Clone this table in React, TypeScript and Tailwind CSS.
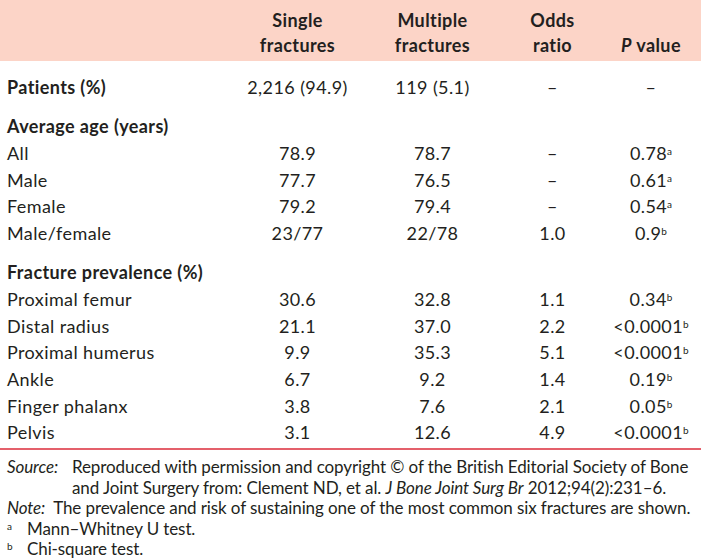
import React from "react";

const font = { fontFamily: "Lato, 'Open Sans', sans-serif" };

type Row = {
  label: string;
  bold?: boolean;
  gap?: boolean;
  c1?: string;
  c2?: string;
  c3?: string;
  c4?: string;
  sup?: string;
};

const rows: Row[] = [
  { label: "Patients (%)", bold: true, c1: "2,216 (94.9)", c2: "119 (5.1)", c3: "–", c4: "–" },
  { label: "Average age (years)", bold: true, gap: true },
  { label: "All", c1: "78.9", c2: "78.7", c3: "–", c4: "0.78", sup: "a" },
  { label: "Male", c1: "77.7", c2: "76.5", c3: "–", c4: "0.61", sup: "a" },
  { label: "Female", c1: "79.2", c2: "79.4", c3: "–", c4: "0.54", sup: "a" },
  { label: "Male/female", c1: "23/77", c2: "22/78", c3: "1.0", c4: "0.9", sup: "b" },
  { label: "Fracture prevalence (%)", bold: true, gap: true },
  { label: "Proximal femur", c1: "30.6", c2: "32.8", c3: "1.1", c4: "0.34", sup: "b" },
  { label: "Distal radius", c1: "21.1", c2: "37.0", c3: "2.2", c4: "<0.0001", sup: "b" },
  { label: "Proximal humerus", c1: "9.9", c2: "35.3", c3: "5.1", c4: "<0.0001", sup: "b" },
  { label: "Ankle", c1: "6.7", c2: "9.2", c3: "1.4", c4: "0.19", sup: "b" },
  { label: "Finger phalanx", c1: "3.8", c2: "7.6", c3: "2.1", c4: "0.05", sup: "b" },
  { label: "Pelvis", c1: "3.1", c2: "12.6", c3: "4.9", c4: "<0.0001", sup: "b" },
];

const grid = "grid grid-cols-[230px_135px_135px_105px_92px]";

export default function App() {
  return (
    <div className="w-[701px] h-[560px] bg-white text-[#231f20] overflow-hidden" style={font}>
      {/* Header */}
      <div className={`${grid} h-[61px] bg-[#fcd4c7] text-[18px] tracking-[0.4px] leading-[25px] font-bold pb-[3px]`}>
        <div />
        <div className="flex flex-col justify-end items-center text-center">
          <span>Single</span>
          <span>fractures</span>
        </div>
        <div className="flex flex-col justify-end items-center text-center">
          <span>Multiple</span>
          <span>fractures</span>
        </div>
        <div className="flex flex-col justify-end items-center text-center">
          <span>Odds</span>
          <span>ratio</span>
        </div>
        <div className="flex flex-col justify-end items-center text-center">
          <span>
            <i>P</i> value
          </span>
        </div>
      </div>

      {/* Body */}
      <div className="pt-[13px] pb-[2px] text-[18px] tracking-[0.4px]">
        {rows.map((r, i) => (
          <div
            key={i}
            className={`${grid} h-[26.7px] leading-[26.7px] ${r.gap ? "mt-[12.5px]" : ""}`}
          >
            <div className={`pl-[7px] whitespace-nowrap ${r.bold ? "font-bold" : ""}`}>{r.label}</div>
            <div className="text-center">{r.c1}</div>
            <div className="text-center">{r.c2}</div>
            <div className="text-center">{r.c3}</div>
            <div className="text-center whitespace-nowrap">
              {r.c4}
              {r.sup && <sup className="text-[10px] tracking-normal">{r.sup}</sup>}
            </div>
          </div>
        ))}
      </div>

      <div className="h-[2px] bg-[#e4606b]" />

      {/* Footer */}
      <div className="pt-[7px] pl-[7px] text-[17px] leading-[20.6px] tracking-[-0.1px]">
        <div className="flex">
          <i className="w-[65px] shrink-0">Source:</i>
          <div>
            Reproduced with permission and copyright © of the British Editorial Society of Bone
            <br />
            and Joint Surgery from: Clement ND, et al. <i>J Bone Joint Surg Br</i> 2012;94(2):231–6.
          </div>
        </div>
        <div className="whitespace-nowrap">
          <i>Note:</i>&nbsp; The prevalence and risk of sustaining one of the most common six fractures are shown.
        </div>
        <div className="flex">
          <span className="w-[20px] shrink-0">
            <sup className="text-[10px]">a</sup>
          </span>
          <span>Mann–Whitney U test.</span>
        </div>
        <div className="flex">
          <span className="w-[20px] shrink-0">
            <sup className="text-[10px]">b</sup>
          </span>
          <span>Chi-square test.</span>
        </div>
      </div>
    </div>
  );
}
